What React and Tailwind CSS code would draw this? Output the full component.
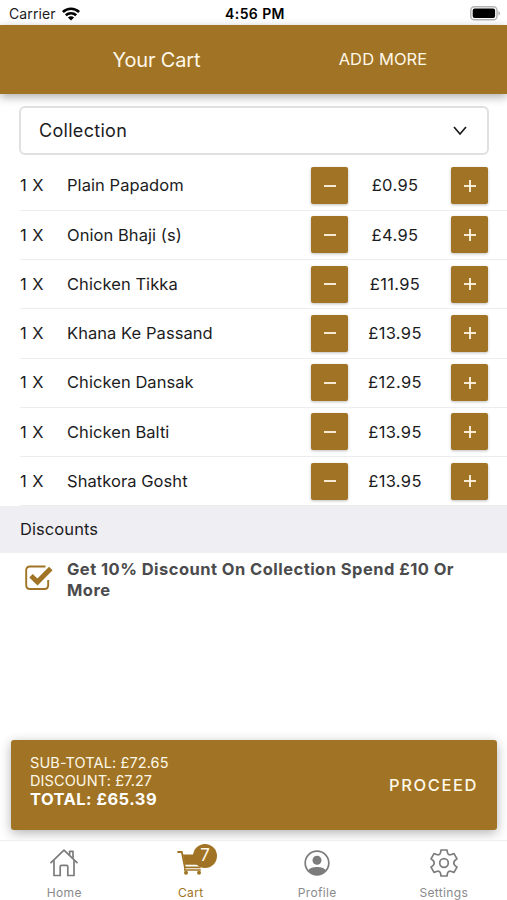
import React, { useState } from "react";

const initialItems = [
  { id: 1, name: "Plain Papadom", qty: 1, price: "0.95" },
  { id: 2, name: "Onion Bhaji (s)", qty: 1, price: "4.95" },
  { id: 3, name: "Chicken Tikka", qty: 1, price: "11.95" },
  { id: 4, name: "Khana Ke Passand", qty: 1, price: "13.95" },
  { id: 5, name: "Chicken Dansak", qty: 1, price: "12.95" },
  { id: 6, name: "Chicken Balti", qty: 1, price: "13.95" },
  { id: 7, name: "Shatkora Gosht", qty: 1, price: "13.95" },
];

const WifiIcon = () => (
  <svg width="18" height="14" viewBox="0 0 18 14" fill="none" stroke="#000" strokeWidth="2.6">
    <path d="M0.9 5C5.4 0.6 12.6 0.6 17.1 5" />
    <path d="M3.8 8.3C6.7 5.5 11.3 5.5 14.2 8.3" />
    <path d="M9 13.6L5.9 10.5C7.6 8.9 10.4 8.9 12.1 10.5Z" fill="#000" stroke="none" />
  </svg>
);

const BatteryIcon = () => (
  <svg width="31" height="15" viewBox="0 0 31 15">
    <rect x="0.8" y="0.8" width="26.2" height="13" rx="3.6" fill="#fff" stroke="#b4b4b4" strokeWidth="1.5" />
    <rect x="2.7" y="2.6" width="22.4" height="9.4" rx="2" fill="#000" />
    <path d="M28.4 5V9.6C30.6 8.8 30.6 5.8 28.4 5Z" fill="#b4b4b4" />
  </svg>
);

const HomeIcon = () => (
  <svg width="28" height="28" viewBox="0 0 28 28" fill="none" stroke="#7c7c7c" strokeWidth="1.7" strokeLinejoin="round" strokeLinecap="round">
    <path d="M1 13.6L14 1.2L27 13.6" />
    <path d="M4 11.8V26.5H10.2V17.6Q10.2 16.4 11.4 16.4H16.6Q17.8 16.4 17.8 17.6V26.5H24V11.8" />
    <path d="M19.6 5.6V2.4H23V9" />
  </svg>
);

const CartIcon = () => (
  <svg width="27" height="25" viewBox="0 0 27 25" fill="#a07424">
    <path d="M0.4 2H4.8L7.9 17.4H23.5" fill="none" stroke="#a07424" strokeWidth="1.8" />
    <path d="M5.8 4.6H26.5L23.3 14.8H7.9Z" />
    <path d="M8 17.4L7.6 20H23.8" fill="none" stroke="#a07424" strokeWidth="1.3" />
    <circle cx="9" cy="22.8" r="2" />
    <circle cx="22" cy="22.8" r="2" />
  </svg>
);

const ProfileIcon = () => (
  <svg width="26" height="26" viewBox="0 0 26 26">
    <circle cx="13" cy="13" r="11.8" fill="none" stroke="#7c7c7c" strokeWidth="1.7" />
    <circle cx="13" cy="10.3" r="4.5" fill="#7c7c7c" />
    <path d="M4 20.5C6 17.4 10 16.9 13 16.9C16 16.9 20 17.4 22 20.5C17.5 26.2 8.5 26.2 4 20.5Z" fill="#7c7c7c" />
  </svg>
);

const SettingsIcon = () => (
  <svg width="28" height="28" viewBox="0 0 28 28" fill="none" stroke="#7c7c7c" strokeWidth="1.7" strokeLinejoin="round">
    <path d="M11 1H17L17.4 3.4Q18.2 6.6 21.4 5.5L24 4.6L27 9.8L25 11.4Q22.6 14 25 16.6L27 18.2L24 23.4L21.4 22.5Q18.2 21.4 17.4 24.6L17 27H11L10.6 24.6Q9.8 21.4 6.6 22.5L4 23.4L1 18.2L3 16.6Q5.4 14 3 11.4L1 9.8L4 4.6L6.6 5.5Q9.8 6.6 10.6 3.4Z" />
    <circle cx="14" cy="14" r="4.3" />
  </svg>
);

const CheckIcon = () => (
  <svg width="28" height="26" viewBox="0 0 28 26" fill="none" stroke="#a07424">
    <path d="M20.5 1.5H5Q1.2 1.5 1.2 5V20Q1.2 24 5 24H19.5Q23.2 24 23.2 20V15" strokeWidth="1.9" />
    <path d="M6 10.8L12.5 17L25.8 3.6" strokeWidth="5" />
  </svg>
);

const QtyButton = ({ plus, onClick }) => (
  <button
    onClick={onClick}
    aria-label={plus ? "Increase" : "Decrease"}
    className="flex h-[37px] w-[37px] items-center justify-center rounded-[2px] bg-[#a07424] shadow-[0_1px_3px_rgba(0,0,0,0.25)]"
  >
    <svg width="12" height="12" viewBox="0 0 12 12" stroke="#fff7e8" strokeWidth="1.8">
      <path d="M0 6H12" />
      {plus && <path d="M6 0V12" />}
    </svg>
  </button>
);

const App = () => {
  const [items, setItems] = useState(initialItems);
  const [activeTab, setActiveTab] = useState("Cart");

  const changeQty = (id, diff) => {
    setItems((prev) =>
      prev.map((item) =>
        item.id === id ? { ...item, qty: Math.max(0, item.qty + diff) } : item
      )
    );
  };

  const tabs = [
    { name: "Home", icon: <HomeIcon /> },
    { name: "Cart", icon: <CartIcon />, badge: 7 },
    { name: "Profile", icon: <ProfileIcon /> },
    { name: "Settings", icon: <SettingsIcon /> },
  ];

  return (
    <div className="flex h-[900px] w-[507px] flex-col overflow-hidden bg-white font-['Inter',sans-serif] text-[#1c1c1e]">
      {/* Status bar */}
      <div className="grid h-[25px] shrink-0 grid-cols-3 items-center pt-[2px] pr-[6px] pl-[9px] text-[14px]">
        <div className="flex items-center gap-[6px]">
          <span className="tracking-[0.1px]">Carrier</span>
          <WifiIcon />
        </div>
        <span className="text-center text-[14px] font-semibold tracking-[0.4px] text-black">4:56 PM</span>
        <div className="flex justify-end">
          <BatteryIcon />
        </div>
      </div>

      {/* Header */}
      <header className="z-10 flex h-[69px] shrink-0 items-center bg-[#a07424] text-[#fff7e8] shadow-[0_3px_9px_rgba(0,0,0,0.32)]">
        <h1 className="w-[313px] pt-px text-center text-[20px] tracking-[-0.15px]">Your Cart</h1>
        <button className="w-[140px] text-center text-[16.5px] tracking-[0.1px]">ADD MORE</button>
      </header>

      {/* Order type */}
      <div className="pr-[18px] pl-[19px] pt-3">
        <button className="flex h-[49px] w-full items-center justify-between rounded-[6px] border-2 border-[#e0e0e2] pr-[20px] pl-[18px] text-[18px] tracking-[0.3px]">
          <span>Collection</span>
          <svg width="14" height="10" viewBox="0 0 14 10" fill="none" stroke="#1c1c1e" strokeWidth="1.7">
            <path d="M1 1L7 8L13 1" />
          </svg>
        </button>
      </div>

      {/* Cart items */}
      <ul className="mt-[6.5px] pl-[20px] text-[16.5px] tracking-[0.06px]">
        {items.map((item) => (
          <li key={item.id} className="flex h-[49.25px] items-center border-b border-[#ededf0] pr-[19px]">
            <span className="w-[47px] tracking-[0.4px]">{item.qty} X</span>
            <span className="flex-1">{item.name}</span>
            <QtyButton onClick={() => changeQty(item.id, -1)} />
            <span className="w-[103px] pr-[9px] text-center tracking-[0.35px]">£{item.price}</span>
            <QtyButton plus onClick={() => changeQty(item.id, 1)} />
          </li>
        ))}
      </ul>

      {/* Discounts */}
      <h2 className="flex h-[47px] shrink-0 items-center bg-[#efeef3] pl-[20px] text-[16.5px] tracking-[0.08px]">
        Discounts
      </h2>
      <div className="flex items-start pt-[5px] pl-[25px]">
        <div className="w-[42px] pt-[7px]">
          <CheckIcon />
        </div>
        <p className="w-[405px] pt-px text-[16.5px] leading-[21px] font-bold tracking-[0.46px] text-[#4b4b4d]">
          Get 10% Discount On Collection Spend £10 Or More
        </p>
      </div>

      {/* Totals */}
      <div className="mt-auto pr-[10px] pb-[10px] pl-[11px]">
        <div className="flex h-[90px] items-center justify-between rounded-[3px] bg-[#a07424] pr-[19px] pl-[19px] text-[#fff7e8] shadow-[0_3px_12px_rgba(0,0,0,0.3)]">
          <div className="pb-[8px] text-[14.5px] leading-[18px] tracking-[0.1px]">
            <p>SUB-TOTAL: £72.65</p>
            <p>DISCOUNT: £7.27</p>
            <p className="text-[16.5px] leading-[19px] font-bold tracking-[0.45px] text-white">TOTAL: £65.39</p>
          </div>
          <button className="text-[16.5px] font-medium tracking-[1.6px]">PROCEED</button>
        </div>
      </div>

      {/* Bottom tabs */}
      <nav className="z-10 grid h-[60px] shrink-0 grid-cols-4 border-t border-[#eeeeef] bg-white pl-px">
        {tabs.map((tab) => (
          <button
            key={tab.name}
            onClick={() => setActiveTab(tab.name)}
            className={`flex flex-col items-center text-[12px] tracking-[0.35px] ${
              activeTab === tab.name ? "text-[#a07424]" : "text-[#8a8a8c]"
            }`}
          >
            <span className="relative flex h-[43px] items-center justify-center">
              {tab.icon}
              {tab.badge && (
                <span className="absolute top-[3px] left-[16px] flex h-[24px] w-[24px] items-center justify-center rounded-full bg-[#a07424] text-[17px] text-[#fff7e8]">
                  {tab.badge}
                </span>
              )}
            </span>
            <span className="leading-[17px]">{tab.name}</span>
          </button>
        ))}
      </nav>
    </div>
  );
};

export default App;
